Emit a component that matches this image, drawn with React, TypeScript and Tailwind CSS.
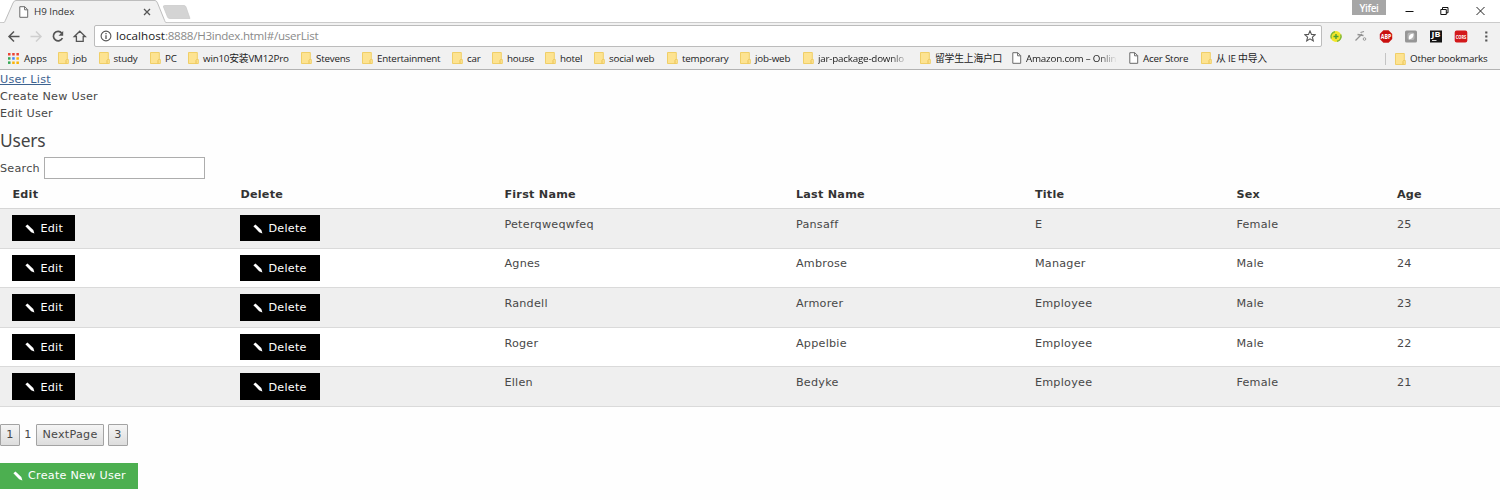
import React from "react";

function FolderIcon() {
  return (
    <svg width="11" height="12" viewBox="0 0 11 12" className="shrink-0">
      <path d="M0.5 0.5H9.3V7.5H10.3V11.5H0.5Z" fill="#fde391" stroke="#f0cf68" />
      <path d="M8 11.5V8.5L9.3 7" fill="none" stroke="#e9c255" />
    </svg>
  );
}

function PageIcon() {
  return (
    <svg width="10" height="12" viewBox="0 0 10 12" className="shrink-0">
      <path d="M0.8 0.7H5.8L8.7 3.6V11.3H0.8Z" fill="#fff" stroke="#6a6a6a" />
      <path d="M5.6 0.8V3.8H8.6" fill="none" stroke="#6a6a6a" />
    </svg>
  );
}

function PencilIcon() {
  return (
    <svg width="10" height="10" viewBox="0 0 10 10" className="shrink-0">
      <path d="M0.4 2.2L2.5 0.5L8.3 6.1L9.4 9.4L6.2 8.2Z" fill="#fff" />
    </svg>
  );
}

type Bookmark = { label: string; width: string; page?: boolean; fade?: boolean };

const bookmarks: Bookmark[] = [
  { label: "job", width: "w-[40.5px]" },
  { label: "study", width: "w-[51.5px]" },
  { label: "PC", width: "w-[38px]" },
  { label: "win10安装VM12Pro", width: "w-[113px]" },
  { label: "Stevens", width: "w-[61px]" },
  { label: "Entertainment", width: "w-[90px]" },
  { label: "car", width: "w-[40px]" },
  { label: "house", width: "w-[53px]" },
  { label: "hotel", width: "w-[49px]" },
  { label: "social web", width: "w-[73px]" },
  { label: "temporary", width: "w-[73px]" },
  { label: "job-web", width: "w-[63px]" },
  { label: "jar-package-downlo", width: "w-[117px]", fade: true },
  { label: "留学生上海户口", width: "w-[92px]" },
  { label: "Amazon.com – Onlin", width: "w-[117px]", page: true, fade: true },
  { label: "Acer Store", width: "w-[72px]", page: true },
  { label: "从 IE 中导入", width: "w-[80px]" },
];

function TabStrip() {
  return (
    <div className="relative flex h-[23px] bg-white">
      <svg width="1500" height="23" className="absolute left-0 top-0">
        <path d="M0 22.5H1500" stroke="#cbcbcb" />
        <path d="M3 23.5C5 22 5 21 6 19L13 3Q14 0.5 16 0.5H155Q156.500 0.500 157.500 3L164 19C165 21.500 165 22 167 23.500Z" fill="#f1f1f1" stroke="#bdbdbd" />
        <path d="M164.500 5.500H184Q185.500 5.500 186 7L190 18.500H170Q168 18.500 167.500 17L163.500 7Q163 5.500 164.500 5.500Z" fill="#d4d4d4" stroke="#c9c9c9" strokeWidth="0.7" />
      </svg>
      <div className="relative flex h-[23px] w-[160px] items-center pl-[19px]">
        <PageIcon />
        <span className="ml-[5px] w-[109px] text-[9.800px] leading-none tracking-[-0.05px] text-[#333]">H9 Index</span>
        <svg width="8" height="8" viewBox="0 0 8 8">
          <path d="M1 1L7 7M7 1L1 7" stroke="#555" strokeWidth="1.3" />
        </svg>
      </div>
      <div className="relative ml-auto flex h-[21px] items-center">
        <div className="mr-[17px] flex h-[15px] w-[34px] items-center justify-center self-start bg-[#a6a6a6] text-[10px] font-semibold leading-none tracking-[-0.400px] text-white">Yifei</div>
        <svg width="97" height="20" viewBox="1403 0 97 20">
          <path d="M1405.500 10.500H1413.500" stroke="#111" />
          <path d="M1440.800 8.500H1446.300V13.500H1440.800ZM1442.500 8.500V6.500H1448V11.800H1446.300" fill="none" stroke="#111" />
          <path d="M1476.500 6L1484.500 14M1484.500 6L1476.500 14" stroke="#222" />
        </svg>
      </div>
    </div>
  );
}

function NavIcons() {
  return (
    <svg width="94" height="26" viewBox="0 0 94 26" fill="none" stroke="#555" strokeWidth="1.5" className="shrink-0">
      <path d="M19.500 13.500H9.200M14 8.500L9 13.500L14 18.500" />
      <path d="M30.500 13.500H40.500M36 8.500L41 13.500L36 18.500" stroke="#cfcfcf" />
      <path d="M61.800 10.200A4.700 4.700 0 1 0 62.400 15" strokeWidth="1.700" />
      <path d="M63.200 8V12.700H58.500Z" fill="#555" stroke="none" />
      <path d="M74.300 13.500L79.800 8.200L85.300 13.500H83.200V18.300H76.400V13.500Z" strokeWidth="1.300" />
    </svg>
  );
}

function Toolbar() {
  return (
    <div className="flex h-[26px] items-center bg-[#f1f1f1]">
      <NavIcons />
      <div className="flex h-[22px] w-[1228px] items-center rounded-[2px] border border-[#bcbcbc] bg-white pl-[5px] pr-[5px]">
        <svg width="12" height="12" viewBox="0 0 12 12">
          <circle cx="6" cy="6" r="4.900" fill="none" stroke="#555" strokeWidth="1.100" />
          <path d="M6 5.200V9M6 3V4.300" stroke="#555" strokeWidth="1.300" />
        </svg>
        <span className="ml-[4px] text-[11.600px] leading-none tracking-[-0.270px] text-[#8a8a8a]">
          <span className="tracking-[0.040px] text-[#222]">localhost</span>:8888/H3index.html#/userList
        </span>
        <svg width="12" height="12" viewBox="0 0 12 12" className="ml-auto">
          <path d="M6 0.900L7.500 4.400L11.300 4.700L8.400 7.200L9.300 10.900L6 8.900L2.700 10.900L3.600 7.200L0.700 4.700L4.500 4.400Z" fill="none" stroke="#555" strokeWidth="1.100" />
        </svg>
      </div>
      <svg width="178" height="26" viewBox="1322 0 178 26" className="shrink-0">
        <circle cx="1336" cy="13.500" r="5.400" fill="#f3e52b" />
        <path d="M1331.300 15.500A5 5 0 0 1 1335 8.700M1340.700 11.500A5 5 0 0 1 1337 18.300" fill="none" stroke="#7fb83a" strokeWidth="1.400" />
        <path d="M1333.500 13.500H1338.500M1336 11V16" stroke="#4b9e35" strokeWidth="1.400" />
        <path d="M1355.500 17.500L1362 11M1357.500 11.500L1363.500 12.500M1360.500 9.500L1364 8.500" stroke="#929292" strokeWidth="1.300" fill="none" />
        <circle cx="1364.500" cy="16" r="1.300" fill="none" stroke="#999" />
        <path d="M1383.400 7.300H1388.600L1392.200 11V16L1388.600 19.700H1383.400L1379.800 16V11Z" fill="#c9100f" />
        <text x="1386" y="16" textAnchor="middle" fontSize="6.500" fontWeight="700" fill="#fff" textLength="10.500" lengthAdjust="spacingAndGlyphs">ABP</text>
        <rect x="1405" y="7.500" width="12" height="12" rx="1.500" fill="#969696" />
        <rect x="1407.500" y="9.500" width="7" height="7.500" rx="2" fill="#b6b6b6" />
        <path d="M1409 16.500Q1407.800 11 1413.500 10.500Q1414 15.500 1409 16.500Z" fill="#fff" />
        <rect x="1430" y="7.500" width="12" height="12" fill="#151515" />
        <text x="1431.500" y="14.300" fontSize="6.500" fontWeight="700" fill="#fff" textLength="9" lengthAdjust="spacingAndGlyphs">JB</text>
        <path d="M1432 17.500H1436.500" stroke="#ddd" />
        <rect x="1454.700" y="7.500" width="12.600" height="12" rx="2" fill="#d3191b" />
        <text x="1461" y="15.800" textAnchor="middle" fontSize="6" fontWeight="700" fill="#fff" textLength="10.500" lengthAdjust="spacingAndGlyphs">CORS</text>
        <path d="M1485.200 8.500H1487.400V10.500H1485.200ZM1485.200 12.500H1487.400V14.500H1485.200ZM1485.200 16.500H1487.400V18.500H1485.200Z" fill="#555" />
      </svg>
    </div>
  );
}

function BookmarksBar() {
  return (
    <div className="flex h-[21px] items-center border-b border-[#b3b3b3] bg-[#f1f1f1] pl-[8px] pb-[1px] text-[9.800px] leading-none tracking-[-0.200px] text-[#222]">
      <div className="flex w-[50px] shrink-0 items-center">
        <svg width="11" height="11" viewBox="0 0 11 11" className="mr-[5px] shrink-0">
          <path d="M0 0H2.500V2.500H0ZM4.200 0H6.700V2.500H4.200ZM8.400 0H10.900V2.500H8.400Z" fill="#ea4335" />
          <path d="M0 4.200H2.500V6.700H0Z" fill="#34a853" />
          <path d="M4.200 4.200H6.700V6.700H4.200Z" fill="#4285f4" />
          <path d="M8.400 4.200H10.900V6.700H8.400ZM4.200 8.400H6.700V10.900H4.200ZM8.400 8.400H10.900V10.900H8.400Z" fill="#fbb305" />
          <path d="M0 8.400H2.500V10.900H0Z" fill="#34a853" />
        </svg>
        <span className="tracking-normal">Apps</span>
      </div>
      {bookmarks.map((b) => (
        <div key={b.label} className={`flex shrink-0 items-center ${b.width}`}>
          {b.page ? <PageIcon /> : <FolderIcon />}
          <span
            className={`ml-[4px] whitespace-nowrap py-[3px] ${
              b.fade ? "w-[91px] [mask-image:linear-gradient(to_right,black_80%,transparent)]" : ""
            }`}
          >
            {b.label}
          </span>
        </div>
      ))}
      <div className="ml-auto flex w-[115px] shrink-0 items-center">
        <div className="mr-[9px] h-[12px] w-px bg-[#c4c4c4]" />
        <FolderIcon />
        <span className="ml-[4px] whitespace-nowrap">Other bookmarks</span>
      </div>
    </div>
  );
}

const users = [
  ["Peterqweqwfeq", "Pansaff", "E", "Female", "25"],
  ["Agnes", "Ambrose", "Manager", "Male", "24"],
  ["Randell", "Armorer", "Employee", "Male", "23"],
  ["Roger", "Appelbie", "Employee", "Male", "22"],
  ["Ellen", "Bedyke", "Employee", "Female", "21"],
];

const columns = "grid grid-cols-[228px_264px_291.5px_239px_201.5px_160.5px_1fr] pl-[12.400px]";

function ActionButton({ label, width }: { label: string; width: string }) {
  return (
    <button className={`mt-[6px] flex h-[26.500px] items-center bg-black pl-[13px] pt-px text-white ${width}`}>
      <PencilIcon />
      <span className="ml-[5px]">{label}</span>
    </button>
  );
}

function UserTable() {
  return (
    <div>
      <div className={`${columns} h-[29.950px] border-b border-[#d6d6d6] pt-[7px] font-bold text-[#333]`}>
        {["Edit", "Delete", "First Name", "Last Name", "Title", "Sex", "Age"].map((h) => (
          <div key={h}>{h}</div>
        ))}
      </div>
      {users.map((row, i) => (
        <div key={row[0]} className={`${columns} h-[39.600px] border-b border-[#dadada] ${i % 2 === 0 ? "bg-[#efefef]" : "bg-white"}`}>
          <ActionButton label="Edit" width="w-[62.500px]" />
          <ActionButton label="Delete" width="w-[79.500px]" />
          {row.map((cell, j) => (
            <div key={j} className="pt-[6.900px]">{cell}</div>
          ))}
        </div>
      ))}
    </div>
  );
}

const pagerButton =
  "flex h-[22px] items-center justify-center rounded-[1px] border border-[#a3a3a3] bg-linear-to-b from-[#f5f5f5] to-[#dddddd]";

export default function App() {
  return (
    <div className="h-[500px] w-[1500px] overflow-hidden bg-[#fefefe] font-['Open_Sans','Noto_Sans_CJK_SC',sans-serif]">
      <TabStrip />
      <Toolbar />
      <BookmarksBar />
      <main className="font-['DejaVu_Sans',Verdana,sans-serif] text-[11.200px] leading-[17px] tracking-[0.250px] text-[#484848]">
        <nav className="flex flex-col pt-px">
          <a className="text-[#3d6390] underline">User List</a>
          <a>Create New User</a>
          <a>Edit User</a>
        </nav>
        <h3 className="mt-[5px] h-[30px] font-['Noto_Sans',sans-serif] text-[17.400px] leading-[26px] tracking-[-0.200px] text-[#444]">Users</h3>
        <div className="flex h-[22px] items-center">
          <label className="w-[43.500px]">Search</label>
          <input className="h-[22px] w-[161px] border border-[#adadad] bg-white" />
        </div>
        <UserTable />
        <div className="mt-[17px] flex items-center">
          <button className={`${pagerButton} w-[20px]`}>1</button>
          <span className="w-[16px] text-center">1</span>
          <button className={`${pagerButton} w-[68px]`}>NextPage</button>
          <button className={`${pagerButton} ml-[4px] w-[20px]`}>3</button>
        </div>
        <button className="mt-[17px] flex h-[26px] w-[138px] items-center bg-[#4caf50] pl-[13px] text-white">
          <PencilIcon />
          <span className="ml-[5px] whitespace-nowrap">Create New User</span>
        </button>
      </main>
    </div>
  );
}
